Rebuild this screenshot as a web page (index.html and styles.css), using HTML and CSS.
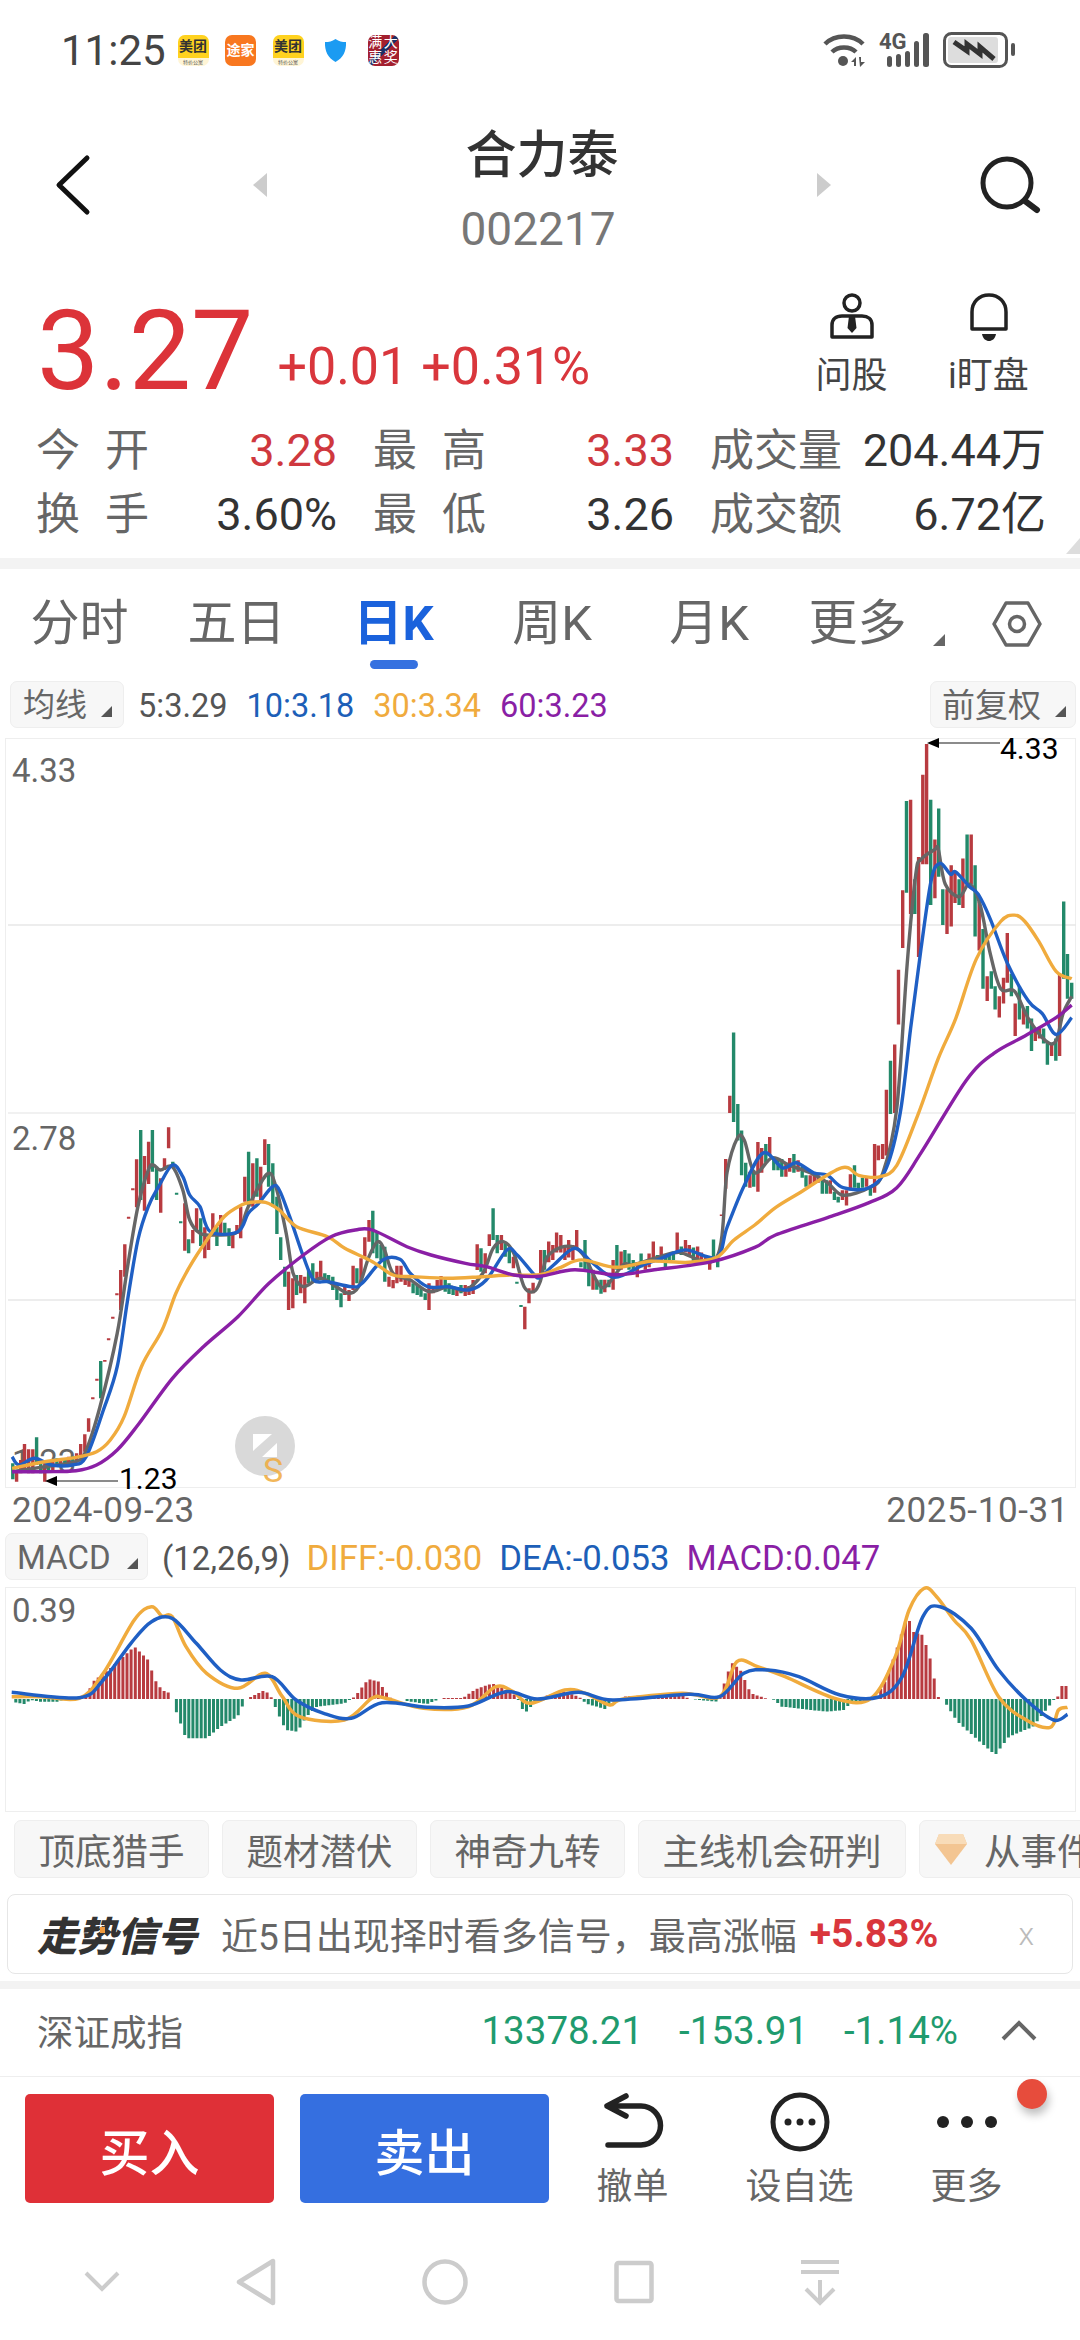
FILE: index.html
```html
<!DOCTYPE html>
<html lang="zh-CN">
<head>
  <meta charset="UTF-8">
  <meta name="viewport" content="width=device-width, initial-scale=1">
  <title>合力泰 002217</title>
  <link rel="stylesheet" href="styles.css">
</head>

<body>
  <div class="screen">

    <div class="status">
      <span class="time">11:25</span>
      <div class="apps">
        <div class="app app-mt"><b>美团</b><i>特价公寓</i></div>
        <div class="app app-tj">途家</div>
        <div class="app app-mt"><b>美团</b><i>特价公寓</i></div>
        <svg class="shield" viewBox="0 0 31 31">
          <path d="M15.5 4 C19 6.5 22 7 26 7 C26.5 16 23 23 15.5 27 C8 23 4.5 16 5 7 C9 7 12 6.5 15.5 4 Z" fill="#1b9bf2"/>
        </svg>
        <div class="app app-red"><span>满</span><span>大</span><span>惠</span><span>奖</span></div>
      </div>
      <div class="sys">
        <svg class="wifi" viewBox="0 0 44 34">
          <path d="M2 11 C12 1 30 1 40 11 M9 19 C15 13 27 13 33 19" fill="none" stroke="#555" stroke-width="4.5"/>
          <circle cx="20" cy="28" r="5" fill="#555"/>
          <path d="M28 29 L33 24 V33 H31 V29 Z M36 24 H38 V29 L42 29 L37 34 Z" fill="#555"/>
        </svg>
        <svg class="signal" viewBox="0 0 52 34">
          <text class="net" x="0" y="16">4G</text>
          <rect x="8" y="23" width="5" height="11" rx="2.5"/>
          <rect x="17" y="21" width="5" height="13" rx="2.5"/>
          <rect x="26" y="18" width="5" height="16" rx="2.5"/>
          <rect x="35" y="8" width="5" height="26" rx="2.5"/>
          <rect x="44" y="0" width="6" height="34" rx="2.5"/>
        </svg>
        <svg class="battery" viewBox="0 0 72 37">
          <rect x="1.5" y="1.5" width="62" height="33" rx="7" fill="#fff" stroke="#555" stroke-width="3"/>
          <rect x="5" y="5" width="50" height="26" rx="3" fill="#ddd"/>
          <path d="M11 10 L24 19 V12 L37 22 V15 L51 27" fill="none" stroke="#333" stroke-width="5"/>
          <rect x="68" y="11" width="4" height="13" rx="2" fill="#555"/>
        </svg>
      </div>
    </div>

    <div class="head">
      <svg class="back" viewBox="0 0 36 60">
        <path d="M33 3 L5 30 L33 57" fill="none" stroke="#111" stroke-width="5" stroke-linecap="round" stroke-linejoin="round"/>
      </svg>
      <div class="title-bar">
        <span class="arrow arrow-l"></span>
        <div class="title-box">
          <div class="title">合力泰</div>
          <div class="code">002217</div>
        </div>
        <span class="arrow arrow-r"></span>
      </div>
      <svg class="search" viewBox="0 0 62 60">
        <circle cx="28" cy="28" r="24" fill="none" stroke="#222" stroke-width="5"/>
        <path d="M46 46 L58 55" stroke="#222" stroke-width="6" stroke-linecap="round"/>
      </svg>
    </div>

    <div class="quote">
      <div class="price">3.27</div>
      <div class="delta">+0.01 +0.31%</div>
      <div class="quote-tools">
        <div class="q-tool">
          <svg viewBox="0 0 50 50">
            <circle cx="25" cy="10" r="8" fill="none" stroke="#222" stroke-width="3.5"/>
            <path d="M5 44 V32 C5 26 9 23 15 23 H35 C41 23 45 26 45 32 V44 Z" fill="none" stroke="#222" stroke-width="3.5" stroke-linejoin="round"/>
            <path d="M22 23 H28 L29.5 35 L25 40 L20.5 35 Z" fill="#222"/>
          </svg>
          <span>问股</span>
        </div>
        <div class="q-tool">
          <svg viewBox="0 0 50 50">
            <path d="M8 36 V19 C8 9 15 2 25 2 C35 2 42 9 42 19 V36 Z" fill="none" stroke="#222" stroke-width="3.5" stroke-linejoin="round"/>
            <path d="M18 41 H32 C31 46 28 48 25 48 C22 48 19 46 18 41 Z" fill="#222"/>
          </svg>
          <span>i盯盘</span>
        </div>
      </div>
    </div>

    <div class="stats">
      <div class="stat"><span class="lbl lbl-2">今开</span><span class="val red">3.28</span></div>
      <div class="stat"><span class="lbl lbl-2">最高</span><span class="val red">3.33</span></div>
      <div class="stat"><span class="lbl">成交量</span><span class="val">204.44万</span></div>
      <div class="stat"><span class="lbl lbl-2">换手</span><span class="val">3.60%</span></div>
      <div class="stat"><span class="lbl lbl-2">最低</span><span class="val">3.26</span></div>
      <div class="stat"><span class="lbl">成交额</span><span class="val">6.72亿</span></div>
      <span class="corner"></span>
    </div>

    <div class="band band-top"></div>

    <div class="tabs">
      <div class="tab">分时</div>
      <div class="tab">五日</div>
      <div class="tab active">日K</div>
      <div class="tab">周K</div>
      <div class="tab">月K</div>
      <div class="tab tab-more">更多<span class="tri"></span></div>
      <svg class="hex" viewBox="0 0 50 46">
        <path d="M14 2 H36 L48 23 L36 44 H14 L2 23 Z" fill="none" stroke="#666" stroke-width="3.5" stroke-linejoin="round"/>
        <circle cx="25" cy="23" r="7.5" fill="none" stroke="#666" stroke-width="3.5"/>
      </svg>
    </div>

    <div class="ind-row ma-row">
      <div class="pill pill-ma">均线<span class="tri"></span></div>
      <span class="ma c-grey">5:3.29</span>
      <span class="ma c-blue">10:3.18</span>
      <span class="ma c-orange">30:3.34</span>
      <span class="ma c-purple">60:3.23</span>
      <div class="pill pill-fq">前复权<span class="tri"></span></div>
    </div>

    <div class="chart chart-k">
      <svg class="plot" viewBox="6 739 1069 748">
        <path class="grid" d="M8 925 H1076 M8 1300 H1076"/>
        <path class="grid grid-soft" d="M8 1113 H1076"/>
        <text class="axis" x="12" y="782">4.33</text>
        <text class="axis" x="12" y="1150">2.78</text>
        <text class="axis" x="12" y="1473">1.23</text>
        <g id="kCandles"></g>
        <g id="kLines"></g>
        <path d="M927 743 L939 738 V748 Z M45 1481 L57 1476 V1486 Z" fill="#000"/>
        <path d="M939 743 H1000 M57 1481 H118" stroke="#666" stroke-width="1.5"/>
        <text class="mark" x="1000" y="759">4.33</text>
        <text class="mark" x="119" y="1489">1.23</text>
        <circle cx="265" cy="1446" r="30" fill="#d9d9d9"/>
        <path d="M253 1434 H272 L253 1451 Z M277 1443 V1457 H262 Z" fill="#fff"/>
        <text class="sign" x="263" y="1482">S</text>
      </svg>
    </div>

    <div class="dates">
      <span>2024-09-23</span>
      <span>2025-10-31</span>
    </div>

    <div class="ind-row macd-row">
      <div class="pill pill-macd">MACD<span class="tri"></span></div>
      <span class="ma2 ma2-args c-grey">(12,26,9)</span>
      <span class="ma2 c-orange">DIFF:-0.030</span>
      <span class="ma2 c-blue">DEA:-0.053</span>
      <span class="ma2 c-purple">MACD:0.047</span>
    </div>

    <div class="chart chart-macd">
      <svg class="plot" viewBox="6 1588 1069 223">
        <text class="axis" x="12" y="1622">0.39</text>
        <g id="macdBars"></g>
        <g id="macdLines"></g>
      </svg>
    </div>

    <div class="chips">
      <div class="chip">顶底猎手</div>
      <div class="chip">题材潜伏</div>
      <div class="chip">神奇九转</div>
      <div class="chip">主线机会研判</div>
      <div class="chip chip-gem">
        <svg class="gem" viewBox="0 0 34 32">
          <path d="M5 1 H29 L33 11 L17 32 L1 11 Z" fill="#f3c592"/>
          <path d="M5 1 H29 L33 11 H1 Z" fill="#f8dcb9"/>
        </svg>
        从事件
      </div>
    </div>

    <div class="signal-bar">
      <span class="signal-logo">走势信号</span>
      <span class="signal-text">近5日出现择时看多信号，最高涨幅</span>
      <span class="signal-up">+5.83%</span>
      <span class="signal-close">x</span>
    </div>

    <div class="band band-mid"></div>

    <div class="index">
      <span class="index-name">深证成指</span>
      <div class="index-nums">
        <span>13378.21</span>
        <span>-153.91</span>
        <span>-1.14%</span>
      </div>
      <svg class="index-up" viewBox="0 0 36 20">
        <path d="M2 18 L18 2 L34 18" fill="none" stroke="#666" stroke-width="4"/>
      </svg>
    </div>

    <div class="trade">
      <button class="btn btn-buy">买入</button>
      <button class="btn btn-sell">卖出</button>
      <div class="tool">
        <svg viewBox="0 0 70 60">
          <path d="M28 3 L9 13 L28 23 M9 13 H43 A19.5 19.5 0 0 1 43 52 H10" fill="none" stroke="#222" stroke-width="5.5" stroke-linecap="round" stroke-linejoin="round"/>
        </svg>
        <span>撤单</span>
      </div>
      <div class="tool">
        <svg viewBox="0 0 70 60">
          <circle cx="35" cy="29" r="27" fill="none" stroke="#222" stroke-width="5"/>
          <circle cx="23" cy="29" r="3.5" fill="#222"/>
          <circle cx="35" cy="29" r="3.5" fill="#222"/>
          <circle cx="47" cy="29" r="3.5" fill="#222"/>
        </svg>
        <span>设自选</span>
      </div>
      <div class="tool">
        <svg viewBox="0 0 70 60">
          <circle cx="11" cy="29" r="6" fill="#222"/>
          <circle cx="35" cy="29" r="6" fill="#222"/>
          <circle cx="59" cy="29" r="6" fill="#222"/>
        </svg>
        <span>更多</span>
      </div>
      <span class="badge"></span>
    </div>

    <div class="nav">
      <svg class="nav-down" viewBox="0 0 36 20">
        <path d="M2 2 L18 18 L34 2" fill="none" stroke="#ccc" stroke-width="4"/>
      </svg>
      <svg class="nav-back" viewBox="0 0 40 46">
        <path d="M37 2 V44 L3 23 Z" fill="none" stroke="#ccc" stroke-width="4.5" stroke-linejoin="round"/>
      </svg>
      <svg class="nav-home" viewBox="0 0 46 46">
        <circle cx="23" cy="23" r="20.5" fill="none" stroke="#ccc" stroke-width="4.5"/>
      </svg>
      <svg class="nav-recent" viewBox="0 0 40 46">
        <rect x="2.5" y="4" width="35" height="38" rx="2" fill="none" stroke="#ccc" stroke-width="4.5"/>
      </svg>
      <svg class="nav-drawer" viewBox="0 0 40 46">
        <path d="M1 3 H39 M1 13 H39 M20 21 V43 M6 30 L20 44 L34 30" fill="none" stroke="#ccc" stroke-width="4"/>
      </svg>
    </div>

  </div>

  <script src="chart.js"></script>
</body>
</html>
```

FILE: styles.css
```css
* {
  box-sizing: border-box;
}

body {
  margin: 0;
  background: #fff;
  font-family: Roboto, "Noto Sans CJK SC", sans-serif;
  color: #333;
}

.screen {
  width: 1080px;
  height: 2340px;
  overflow: hidden;
  position: relative;
}

svg {
  display: block;
  overflow: visible;
}

/* status bar */
.status {
  height: 100px;
  display: flex;
  align-items: center;
  padding: 0 65px 0 61px;
}

.time {
  font-size: 42px;
  color: #444;
}

.apps {
  display: flex;
  gap: 16.5px;
  margin-left: 12px;
}

.app {
  width: 31px;
  height: 31px;
  border-radius: 7px;
  font-size: 14px;
  line-height: 1;
  text-align: center;
  overflow: hidden;
}

.app-mt {
  background: #fff5d6;
  color: #333;
}

.app-mt b {
  display: block;
  background: #ffd21f;
  height: 23px;
  line-height: 23px;
  font-weight: 700;
}

.app-mt i {
  display: block;
  font-style: normal;
  font-size: 5px;
  line-height: 8px;
  color: #555;
}

.app-tj {
  background: #f8771f;
  color: #fff;
  line-height: 31px;
  font-weight: 700;
}

.app-red {
  display: grid;
  grid-template-columns: 1fr 1fr;
  background: linear-gradient(135deg, #a3202f 0 45%, #1c2f66 45% 55%, #a3202f 55%);
  color: #fff;
  font-size: 14px;
  line-height: 15px;
}

.shield {
  width: 31px;
  height: 31px;
}

.sys {
  display: flex;
  align-items: center;
  margin-left: auto;
  gap: 12px;
}

.wifi {
  width: 44px;
  height: 34px;
}

.signal {
  width: 52px;
  height: 34px;
  fill: #555;
}

.net {
  font-size: 22px;
  font-weight: 700;
}

.battery {
  width: 72px;
  height: 37px;
}

/* header */
.head {
  height: 170px;
  display: flex;
  align-items: center;
  padding: 0 39px 0 54px;
}

.back {
  width: 36px;
  height: 60px;
  flex: none;
}

.search {
  width: 62px;
  height: 60px;
  flex: none;
}

.title-bar {
  flex: 1;
  display: flex;
  align-items: center;
  justify-content: space-between;
  margin: 0 148px 0 163px;
}

.arrow {
  width: 0;
  height: 0;
  border-top: 12px solid transparent;
  border-bottom: 12px solid transparent;
}

.arrow-l {
  border-right: 14px solid #ccc;
}

.arrow-r {
  border-left: 14px solid #ccc;
}

.title-box {
  text-align: center;
  padding-top: 26px;
  height: 170px;
}

.title {
  font-size: 51px;
  line-height: 60px;
  font-weight: 500;
  color: #333;
}

.code {
  font-size: 46px;
  line-height: 60px;
  margin-top: 13px;
  margin-right: 8px;
  color: #777;
}

/* price */
.quote {
  height: 150px;
  display: flex;
  align-items: flex-start;
  padding-left: 37px;
}

.price {
  font-size: 111px;
  line-height: 120px;
  margin-top: 21px;
  color: #dc3339;
}

.delta {
  font-size: 52px;
  line-height: 60px;
  margin: 67px 0 0 24px;
  color: #d9363c;
}

.quote-tools {
  display: flex;
  margin-left: auto;
  padding: 23px 23px 0 0;
}

.q-tool {
  width: 137px;
  display: flex;
  flex-direction: column;
  align-items: center;
  font-size: 36px;
  line-height: 40px;
  color: #444;
}

.q-tool svg {
  width: 50px;
  height: 50px;
  margin-bottom: 13px;
}

/* stat grid */
.stats {
  height: 138px;
  display: grid;
  grid-template-columns: 301px 301px 336px;
  grid-auto-rows: 60px;
  column-gap: 36px;
  row-gap: 4px;
  padding: 1px 0 0 36px;
  position: relative;
}

.stat {
  display: flex;
  justify-content: space-between;
  font-size: 44px;
  line-height: 60px;
}

.lbl {
  color: #666;
}

.lbl-2 {
  letter-spacing: 25px;
}

.val {
  color: #333;
  font-size: 45px;
}

.red {
  color: #cf383e;
}

.corner {
  position: absolute;
  right: 0;
  bottom: 4px;
  width: 0;
  height: 0;
  border-bottom: 16px solid #ddd;
  border-left: 14px solid transparent;
}

.band {
  background: #f3f3f3;
}

.band-top {
  height: 11px;
}

.band-mid {
  height: 8px;
  margin-top: 7px;
}

/* period tabs */
.tabs {
  height: 109px;
  display: grid;
  grid-template-columns: 159px 155px 159px 158px 156px 141px 1fr;
  padding-top: 25px;
}

.tab {
  font-size: 49px;
  line-height: 60px;
  height: 60px;
  text-align: center;
  color: #666;
  position: relative;
}

.tab.active {
  color: #1a62dc;
  font-weight: 700;
}

.tab.active::after {
  content: "";
  position: absolute;
  left: 50%;
  top: 66px;
  width: 48px;
  height: 9px;
  margin-left: -24px;
  border-radius: 5px;
  background: #3571e0;
}

.tri {
  position: absolute;
  width: 0;
  height: 0;
  border-bottom: 12px solid #666;
  border-left: 12px solid transparent;
}

.tab-more .tri {
  left: 146px;
  bottom: 8px;
}

.hex {
  width: 50px;
  height: 46px;
  margin: 7px 0 0 64px;
}

/* indicator rows */
.ind-row {
  display: flex;
  align-items: center;
  height: 47px;
}

.ma-row {
  margin: 3px 4px 10px 10px;
}

.macd-row {
  margin: 0 4px 7px 5px;
}

.pill {
  height: 47px;
  line-height: 47px;
  background: #f7f7f7;
  border: 1px solid #eee;
  border-radius: 7px;
  color: #666;
  position: relative;
}

.pill .tri {
  border-bottom-color: #555;
  border-bottom-width: 11px;
  border-left-width: 11px;
  bottom: 10px;
}

.pill-ma {
  width: 114px;
  margin-right: 14px;
  padding-left: 12px;
  font-size: 32px;
}

.pill-ma .tri {
  right: 11px;
}

.pill-fq {
  width: 146px;
  margin-left: auto;
  padding-left: 11px;
  font-size: 33px;
}

.pill-fq .tri {
  right: 9px;
}

.pill-macd {
  width: 143px;
  margin-right: 14px;
  padding-left: 11px;
  font-size: 33px;
}

.pill-macd .tri {
  right: 9px;
}

.ma {
  font-size: 32.5px;
  margin-right: 19px;
  padding-top: 3px;
}

.ma2 {
  font-size: 34.7px;
  margin-right: 17px;
  padding-top: 3px;
}

.ma2-args {
  font-size: 33px;
  margin-right: 16px;
}

.c-grey {
  color: #555;
}

.c-blue {
  color: #1d5fb8;
}

.c-orange {
  color: #f0ab3d;
}

.c-purple {
  color: #8a1fa5;
}

/* chart boxes */
.chart {
  margin: 0 4px 0 5px;
  border: 1px solid #eee;
}

.chart-k {
  height: 750px;
}

.chart-macd {
  height: 225px;
}

.plot {
  width: 1069px;
  height: 100%;
}

.grid {
  stroke: #e8e8e8;
  stroke-width: 1.5;
  fill: none;
}

.grid-soft {
  stroke: #f1f1f1;
  stroke-width: 2;
}

.axis {
  font-size: 33px;
  fill: #666;
}

.mark {
  font-size: 30px;
  fill: #000;
}

.sign {
  font-size: 34px;
  fill: #f0ab3d;
  opacity: 0.85;
}

.dates {
  height: 45px;
  display: flex;
  justify-content: space-between;
  align-items: center;
  padding: 0 11px 0 12px;
  font-size: 35px;
  letter-spacing: 0.6px;
  color: #666;
}

/* quick chips */
.chips {
  display: flex;
  gap: 13px;
  margin-top: 8px;
  padding-left: 14px;
}

.chip {
  flex: none;
  display: flex;
  align-items: center;
  height: 58px;
  padding: 0 23.5px;
  background: #f7f7f7;
  border: 1px solid #eee;
  border-radius: 7px;
  font-size: 36.5px;
  color: #666;
}

.chip-gem {
  padding-left: 14px;
}

.gem {
  width: 34px;
  height: 32px;
  margin-right: 16px;
}

/* signal banner */
.signal-bar {
  height: 80px;
  display: flex;
  align-items: center;
  margin: 16px 7px 0;
  padding-left: 29px;
  border: 1px solid #e6e6e6;
  border-radius: 8px;
  position: relative;
}

.signal-logo {
  font-size: 40px;
  font-style: italic;
  font-weight: 900;
  color: #333;
}

.signal-logo::after {
  content: "";
  position: absolute;
  left: 92px;
  top: 32px;
  width: 5px;
  height: 6px;
  background: #f09a3e;
}

.signal-text {
  font-size: 37px;
  margin-left: 24px;
  color: #666;
}

.signal-up {
  font-size: 39px;
  font-weight: 700;
  margin-left: 13px;
  color: #d9363c;
}

.signal-close {
  font-size: 32px;
  font-weight: 300;
  margin-left: auto;
  padding-right: 38px;
  color: #bbb;
}

/* market index */
.index {
  height: 87px;
  display: flex;
  align-items: center;
  padding: 0 43px 4px 37px;
}

.index-name {
  font-size: 36.5px;
  color: #666;
}

.index-nums {
  display: flex;
  gap: 36px;
  margin-left: auto;
  font-size: 38.5px;
  color: #1f9b6e;
}

.index-up {
  width: 36px;
  height: 20px;
  margin-left: 43px;
}

/* trade bar */
.trade {
  height: 163px;
  display: flex;
  align-items: flex-start;
  padding: 17px 0 0 25px;
  border-top: 1px solid #eee;
  position: relative;
}

.btn {
  width: 249px;
  height: 109px;
  border: none;
  border-radius: 5px;
  padding: 0;
  font: inherit;
  font-size: 50px;
  font-weight: 500;
  color: #fff;
}

.btn-buy {
  background: #df3037;
  margin-right: 26px;
}

.btn-sell {
  background: #356fe0;
}

.tool {
  width: 167px;
  margin-top: -1px;
  display: flex;
  flex-direction: column;
  align-items: center;
  font-size: 36px;
  line-height: 40px;
  color: #666;
}

.tool svg {
  width: 70px;
  height: 60px;
  margin-bottom: 14px;
}

.badge {
  position: absolute;
  right: 33px;
  top: 2px;
  width: 30px;
  height: 30px;
  border-radius: 50%;
  background: #e74c3c;
  box-shadow: 2px 6px 8px rgba(0, 0, 0, 0.25);
}

/* system nav */
.nav {
  height: 100px;
  display: flex;
  align-items: flex-start;
  gap: 146px;
  padding: 20px 0 0 84px;
}

.nav-down {
  width: 36px;
  height: 20px;
  margin: 12px -30px 0 0;
}

.nav-back,
.nav-recent,
.nav-drawer {
  width: 40px;
  height: 46px;
}

.nav-home {
  width: 46px;
  height: 46px;
}
```

FILE: chart.js
```js
// points were read off zoomed crops, so each half has its own scale
const left = p => [p[0] / 2.9, 1000 + p[1] / 3];
const right = p => [540 + p[0] / 2.887, 730 + p[1] / 2.01];
const low = p => [p[0] / 1.452, 1500 + p[1] / 3];

const COLORS = { grey: '#666', blue: '#1f5fc4', orange: '#f0ab3d', purple: '#8a1fa5' };

const kLines = [
  ['grey', [[35,1415],[130,1400],[220,1385],[250,1350],[290,1220],[340,1000],[370,800],[400,620],[430,510],[445,495],[465,510],[500,500],[530,570],[550,660],[580,700],[620,705],[690,695],[720,620],[775,522],[800,560],[830,700],[850,820],[880,860],[930,835],[975,860],[1010,880],[1040,860],[1070,770],[1095,725],[1115,750],[1140,820],[1190,840],[1245,875],[1300,860],[1350,870],[1400,820],[1430,745],[1460,725],[1490,760],[1520,860],[1548,875]],
    [[0,1110],[20,1060],[60,1040],[100,1040],[130,1060],[170,1115],[195,1115],[240,1075],[270,1075],[340,1060],[400,1050],[510,1060],[540,890],[570,820],[590,825],[620,890],[670,860],[720,875],[780,890],[830,910],[875,935],[950,920],[990,890],[1030,760],[1060,470],[1085,290],[1100,260],[1140,240],[1150,240],[1170,310],[1210,335],[1240,310],[1270,350],[1300,450],[1330,520],[1370,525],[1410,580],[1460,625],[1490,625],[1510,570],[1535,535]]],
  ['blue', [[35,1370],[55,1395],[100,1375],[150,1395],[210,1395],[250,1370],[300,1230],[340,1100],[370,900],[400,720],[430,620],[460,560],[500,495],[530,530],[550,585],[580,620],[610,695],[690,695],[720,640],[750,610],[790,560],[810,570],[840,650],[880,770],[910,840],[950,845],[1020,860],[1050,850],[1110,780],[1160,778],[1190,820],[1240,860],[1300,860],[1360,870],[1410,840],[1470,750],[1500,765],[1550,825]],
    [[0,1100],[40,1075],[100,1042],[150,1070],[215,1100],[300,1075],[350,1062],[420,1045],[510,1060],[540,1000],[590,915],[645,850],[700,880],[740,870],[790,890],[830,895],[875,920],[950,920],[1000,880],[1040,770],[1070,600],[1100,440],[1130,300],[1155,268],[1185,290],[1200,285],[1240,315],[1265,330],[1300,380],[1350,470],[1410,545],[1450,570],[1490,612],[1535,578]]],
  ['orange', [[35,1405],[130,1385],[220,1372],[280,1355],[320,1320],[360,1250],[410,1100],[470,990],[510,880],[550,800],[600,720],[650,650],[700,615],[730,607],[770,607],[810,630],[860,680],[950,710],[1000,745],[1080,785],[1140,825],[1200,830],[1300,835],[1400,830],[1480,825]],
    [[0,1095],[60,1080],[120,1065],[220,1080],[320,1068],[430,1070],[510,1060],[560,1025],[620,995],[680,960],[750,930],[870,880],[920,895],[980,898],[1030,875],[1090,775],[1150,660],[1200,580],[1260,460],[1330,385],[1370,372],[1400,385],[1440,425],[1490,485],[1535,500]]],
  ['purple', [[35,1415],[130,1415],[220,1412],[280,1395],[340,1350],[400,1275],[500,1135],[590,1040],[690,950],[780,850],[880,765],[960,710],[1030,690],[1080,690],[1180,740],[1250,765],[1350,790],[1410,800],[1490,825]],
    [[0,1098],[100,1085],[220,1095],[330,1085],[500,1068],[620,1040],[680,1015],[830,980],[950,950],[1030,920],[1100,850],[1230,705],[1310,650],[1400,615],[1490,578],[1535,553]]],
];

// x, top, bottom, r/g
const candlesL = [
  [37,1390,1438,'g'],[48,1410,1445,'r'],[60,1380,1420,'r'],[71,1332,1410,'r'],[83,1348,1420,'r'],[95,1348,1420,'r'],[106,1312,1395,'g'],[118,1385,1420,'g'],[130,1385,1445,'r'],[141,1390,1410,'g'],[153,1385,1410,'r'],[165,1375,1400,'g'],[176,1375,1395,'r'],[188,1375,1395,'g'],[199,1370,1392,'r'],[211,1368,1390,'g'],[222,1360,1385,'r'],[234,1332,1375,'r'],[246,1303,1355,'r'],[257,1255,1295,'r'],[269,1192,1198,'r'],[281,1136,1142,'r'],[292,1083,1195,'g'],[304,1080,1085,'r'],[315,1015,1021,'r'],[327,950,956,'r'],[339,880,886,'r'],[350,810,930,'r'],[362,733,830,'r'],[373,650,656,'r'],[385,565,571,'r'],[396,478,622,'r'],[408,390,600,'g'],[419,468,632,'r'],[431,425,552,'r'],[442,390,515,'g'],[454,500,600,'g'],[466,535,638,'r'],[477,475,510,'r'],[489,382,445,'r'],[501,485,500,'g'],[512,578,584,'g'],[524,664,670,'g'],[536,610,752,'r'],[547,718,760,'g'],[559,690,730,'r'],[570,625,690,'r'],[582,655,738,'g'],[594,682,775,'r'],[605,710,750,'r'],[617,640,700,'r'],[629,680,738,'g'],[640,645,705,'r'],[652,668,700,'g'],[664,685,738,'g'],[675,700,745,'r'],[687,675,702,'r'],[698,620,715,'r'],[710,530,605,'r'],[721,455,620,'g'],[733,490,620,'r'],[745,475,590,'g'],[756,500,600,'r'],
  [768,418,495,'r'],[779,432,560,'g'],[791,490,620,'g'],[803,590,702,'g'],[814,712,780,'g'],[826,800,860,'g'],[837,815,930,'r'],[849,835,925,'r'],[860,825,885,'g'],[872,825,880,'r'],[884,830,910,'r'],[895,810,850,'g'],[907,790,845,'g'],[919,815,845,'r'],[930,782,835,'r'],[942,820,840,'g'],[953,825,850,'g'],[965,830,870,'g'],[977,850,900,'g'],[989,880,922,'g'],[1000,860,885,'r'],[1012,870,903,'r'],[1024,797,870,'r'],[1035,805,850,'g'],[1047,775,850,'r'],[1058,712,770,'r'],[1070,660,725,'r'],[1081,632,760,'g'],[1093,695,775,'g'],[1105,735,780,'g'],[1116,740,845,'g'],[1128,830,860,'r'],[1140,840,865,'r'],[1151,797,850,'r'],[1163,797,845,'r'],[1175,825,855,'r'],[1186,830,860,'r'],[1198,850,880,'g'],[1210,855,885,'g'],[1221,865,890,'g'],[1233,880,900,'g'],[1244,850,930,'r'],[1256,860,880,'r'],[1268,840,870,'r'],[1279,828,865,'r'],[1291,838,875,'g'],[1302,850,882,'g'],[1314,860,885,'g'],[1325,865,888,'r'],[1337,855,880,'g'],[1349,855,888,'r'],[1360,858,885,'r'],[1372,840,882,'r'],[1384,733,810,'r'],[1395,745,815,'g'],[1407,760,820,'r'],[1419,703,738,'r'],[1430,625,720,'g'],[1442,705,760,'g'],[1454,705,750,'r'],[1465,730,770,'g'],[1477,750,790,'g'],[1489,770,805,'r'],[1499,845,851,'g'],[1511,915,921,'g'],[1522,920,988,'r'],[1534,865,910,'r'],[1546,848,880,'r'],
];

const candlesR = [
  [2,1045,1095,'r'],[13,1045,1085,'g'],[25,1028,1070,'r'],[37,1035,1065,'r'],[48,1010,1050,'r'],[60,1015,1050,'r'],[72,1035,1065,'r'],[83,1025,1060,'r'],[95,1035,1065,'r'],[106,1005,1045,'r'],[118,1070,1080,'g'],[130,1025,1085,'g'],[141,1065,1118,'g'],[153,1085,1125,'r'],[164,1105,1125,'g'],[176,1105,1133,'g'],[187,1105,1130,'r'],[199,1105,1120,'g'],[211,1065,1125,'r'],[222,1035,1085,'g'],[234,1048,1085,'r'],[245,1045,1075,'g'],[257,1052,1085,'g'],[269,1065,1085,'g'],[281,1070,1100,'r'],[292,1052,1080,'g'],[304,1065,1085,'r'],[315,1052,1080,'r'],[327,1028,1068,'r'],[339,1055,1070,'g'],[350,1038,1065,'r'],[362,1055,1080,'g'],[373,1052,1068,'g'],[385,1048,1065,'g'],[396,1010,1052,'r'],[408,1038,1055,'g'],[420,1025,1050,'r'],[431,1035,1058,'r'],[443,1040,1068,'g'],[455,1038,1065,'r'],[466,1050,1070,'r'],[478,1055,1070,'r'],[490,1065,1085,'r'],[501,1024,1058,'g'],[513,1060,1080,'g'],[524,974,977,'r'],[536,862,922,'r'],[548,735,770,'r'],[559,608,788,'g'],[571,752,825,'g'],[582,805,895,'g'],[594,870,918,'g'],[606,888,920,'r'],[617,885,918,'g'],[629,828,928,'r'],[640,840,890,'r'],[652,832,870,'g'],[663,818,855,'r'],[675,858,885,'g'],[687,862,885,'g'],[698,862,898,'g'],[710,870,898,'r'],[721,860,888,'r'],[733,852,890,'g'],[745,865,888,'r'],[757,878,900,'g'],[768,895,918,'g'],[780,895,915,'r'],[792,892,912,'r'],[803,895,910,'r'],[815,900,932,'g'],[827,905,932,'g'],[838,905,932,'r'],[850,928,945,'g'],[861,938,950,'g'],[873,925,945,'r'],[885,925,956,'r'],[896,893,925,'r'],[908,875,920,'g'],[919,910,925,'g'],[931,900,920,'g'],[943,900,918,'r'],[954,918,936,'g'],[966,832,930,'r'],[977,835,865,'r'],[989,832,862,'r'],[1000,723,855,'r'],[1012,665,772,'g'],[1024,632,770,'r'],[1035,482,592,'r'],[1047,322,438,'r'],[1058,143,327,'g'],[1070,140,370,'r'],[1082,300,370,'g'],[1093,255,456,'r'],[1105,90,270,'r'],[1116,28,270,'r'],[1128,140,352,'g'],[1140,220,338,'r'],[1151,158,295,'g'],[1163,320,392,'g'],[1175,320,410,'r'],[1187,272,395,'r'],[1198,285,348,'r'],[1210,300,352,'g'],[1221,258,358,'r'],[1233,210,310,'g'],[1245,210,310,'r'],[1256,272,415,'g'],[1268,345,443,'r'],[1279,400,520,'g'],[1291,495,545,'r'],[1303,485,520,'g'],[1314,515,562,'g'],[1326,535,578,'r'],[1338,498,550,'r'],[1349,408,508,'r'],[1361,490,535,'g'],[1372,550,615,'r'],[1384,515,582,'g'],[1396,560,592,'r'],[1407,555,600,'g'],[1419,580,645,'g'],[1430,600,625,'r'],[1442,600,620,'r'],[1454,600,630,'g'],[1465,625,673,'g'],[1477,630,655,'r'],[1489,620,665,'g'],[1500,492,655,'r'],[1512,345,500,'g'],[1523,450,540,'g'],[1535,508,540,'g'],
];

const macdLines = [
  ['orange', [[17,590],[60,590],[115,595],[150,520],[195,360],[220,320],[235,348],[250,350],[270,440],[300,520],[345,565],[385,520],[410,590],[435,650],[500,660],[540,595],[560,595],[615,625],[680,620],[720,560],[745,575],[770,610],[820,570],[850,580],[885,615],[905,597],[990,580],[1045,590],[1070,485],[1100,500],[1140,530],[1215,597],[1265,595],[1300,470],[1320,330],[1342,265],[1360,290],[1385,360],[1410,420],[1450,590],[1490,660],[1525,682],[1537,630],[1550,622]]],
  ['blue', [[17,577],[115,593],[150,540],[190,430],[220,365],[250,355],[285,430],[320,510],[350,540],[395,530],[430,600],[470,640],[510,655],[555,608],[620,622],[680,618],[735,575],[780,597],[840,577],[890,600],[1000,583],[1045,590],[1080,520],[1115,510],[1160,530],[1220,585],[1275,592],[1310,530],[1340,350],[1365,320],[1410,385],[1450,510],[1490,600],[1530,660],[1550,643]]],
];

// outline of the histogram, zero is at 597
const macdHist = [[17,617],[22,607],[35,612],[45,600],[57,605],[85,605],[90,600],[115,597],[125,590],[135,545],[160,505],[195,440],[215,480],[225,540],[235,570],[247,580],[250,597],[255,630],[270,715],[300,715],[320,680],[345,650],[357,597],[365,590],[385,570],[392,590],[398,597],[400,625],[415,690],[432,695],[445,650],[460,620],[500,610],[507,600],[510,597],[515,590],[535,537],[550,545],[565,590],[570,597],[585,597],[590,603],[620,612],[635,600],[640,597],[645,594],[672,594],[690,568],[715,550],[745,580],[752,597],[757,625],[765,635],[775,610],[780,597],[790,590],[815,572],[840,590],[845,597],[850,610],[878,627],[890,605],[900,597],[905,590],[990,580],[1000,597],[1015,600],[1040,605],[1045,597],[1050,560],[1062,487],[1075,510],[1090,580],[1115,597],[1125,600],[1135,620],[1200,635],[1225,630],[1235,610],[1262,600],[1270,597],[1285,545],[1300,460],[1318,343],[1325,395],[1340,405],[1350,470],[1362,590],[1368,597],[1370,600],[1390,665],[1420,720],[1445,765],[1465,710],[1500,680],[1530,600],[1535,597],[1540,558],[1553,558]];

const f = n => n.toFixed(1);

function smooth(pts) {
  let d = `M${f(pts[0][0])} ${f(pts[0][1])}`;
  for (let i = 0; i < pts.length - 1; i++) {
    const a = pts[i - 1] || pts[i], b = pts[i], c = pts[i + 1], e = pts[i + 2] || c;
    d += `C${f(b[0] + (c[0] - a[0]) / 6)} ${f(b[1] + (c[1] - a[1]) / 6)} ${f(c[0] - (e[0] - b[0]) / 6)} ${f(c[1] - (e[1] - b[1]) / 6)} ${f(c[0])} ${f(c[1])}`;
  }
  return d;
}

function addPath(group, d, stroke, width) {
  const p = document.createElementNS('http://www.w3.org/2000/svg', 'path');
  p.setAttribute('d', d);
  p.setAttribute('fill', 'none');
  p.setAttribute('stroke', stroke);
  p.setAttribute('stroke-width', width);
  p.setAttribute('stroke-linejoin', 'round');
  group.appendChild(p);
}

function drawBars(group, rows, map, width) {
  const paths = { r: '', g: '' };
  rows.forEach(([x, top, bot, c]) => {
    const [px, y1] = map([x, top]);
    const y2 = map([x, bot])[1];
    paths[c] += `M${f(px)} ${f(y1)}V${f(y2)}`;
  });
  addPath(group, paths.r, '#b83b40', width);
  addPath(group, paths.g, '#23896a', width);
}

// K chart
const kCandles = document.getElementById('kCandles');
const kLinesG = document.getElementById('kLines');
drawBars(kCandles, candlesL, left, 3.4);
drawBars(kCandles, candlesR, right, 3.4);
kLines.forEach(([name, a, b]) => {
  addPath(kLinesG, smooth(a.map(left).concat(b.map(right))), COLORS[name], 3.4);
});

// MACD
const barRows = [];
for (let x = 17; x < 1555; x += 5.98) {
  const i = macdHist.findIndex(p => p[0] >= x);
  if (i < 1) continue;
  const a = macdHist[i - 1], b = macdHist[i];
  const y = a[1] + (b[1] - a[1]) * (x - a[0]) / (b[0] - a[0]);
  if (Math.abs(y - 597) < 1.5) continue;
  barRows.push(y < 597 ? [x, y, 597, 'r'] : [x, 597, y, 'g']);
}
drawBars(document.getElementById('macdBars'), barRows, low, 3);
macdLines.forEach(([name, pts]) => {
  addPath(document.getElementById('macdLines'), smooth(pts.map(low)), COLORS[name], 3.5);
});
```
